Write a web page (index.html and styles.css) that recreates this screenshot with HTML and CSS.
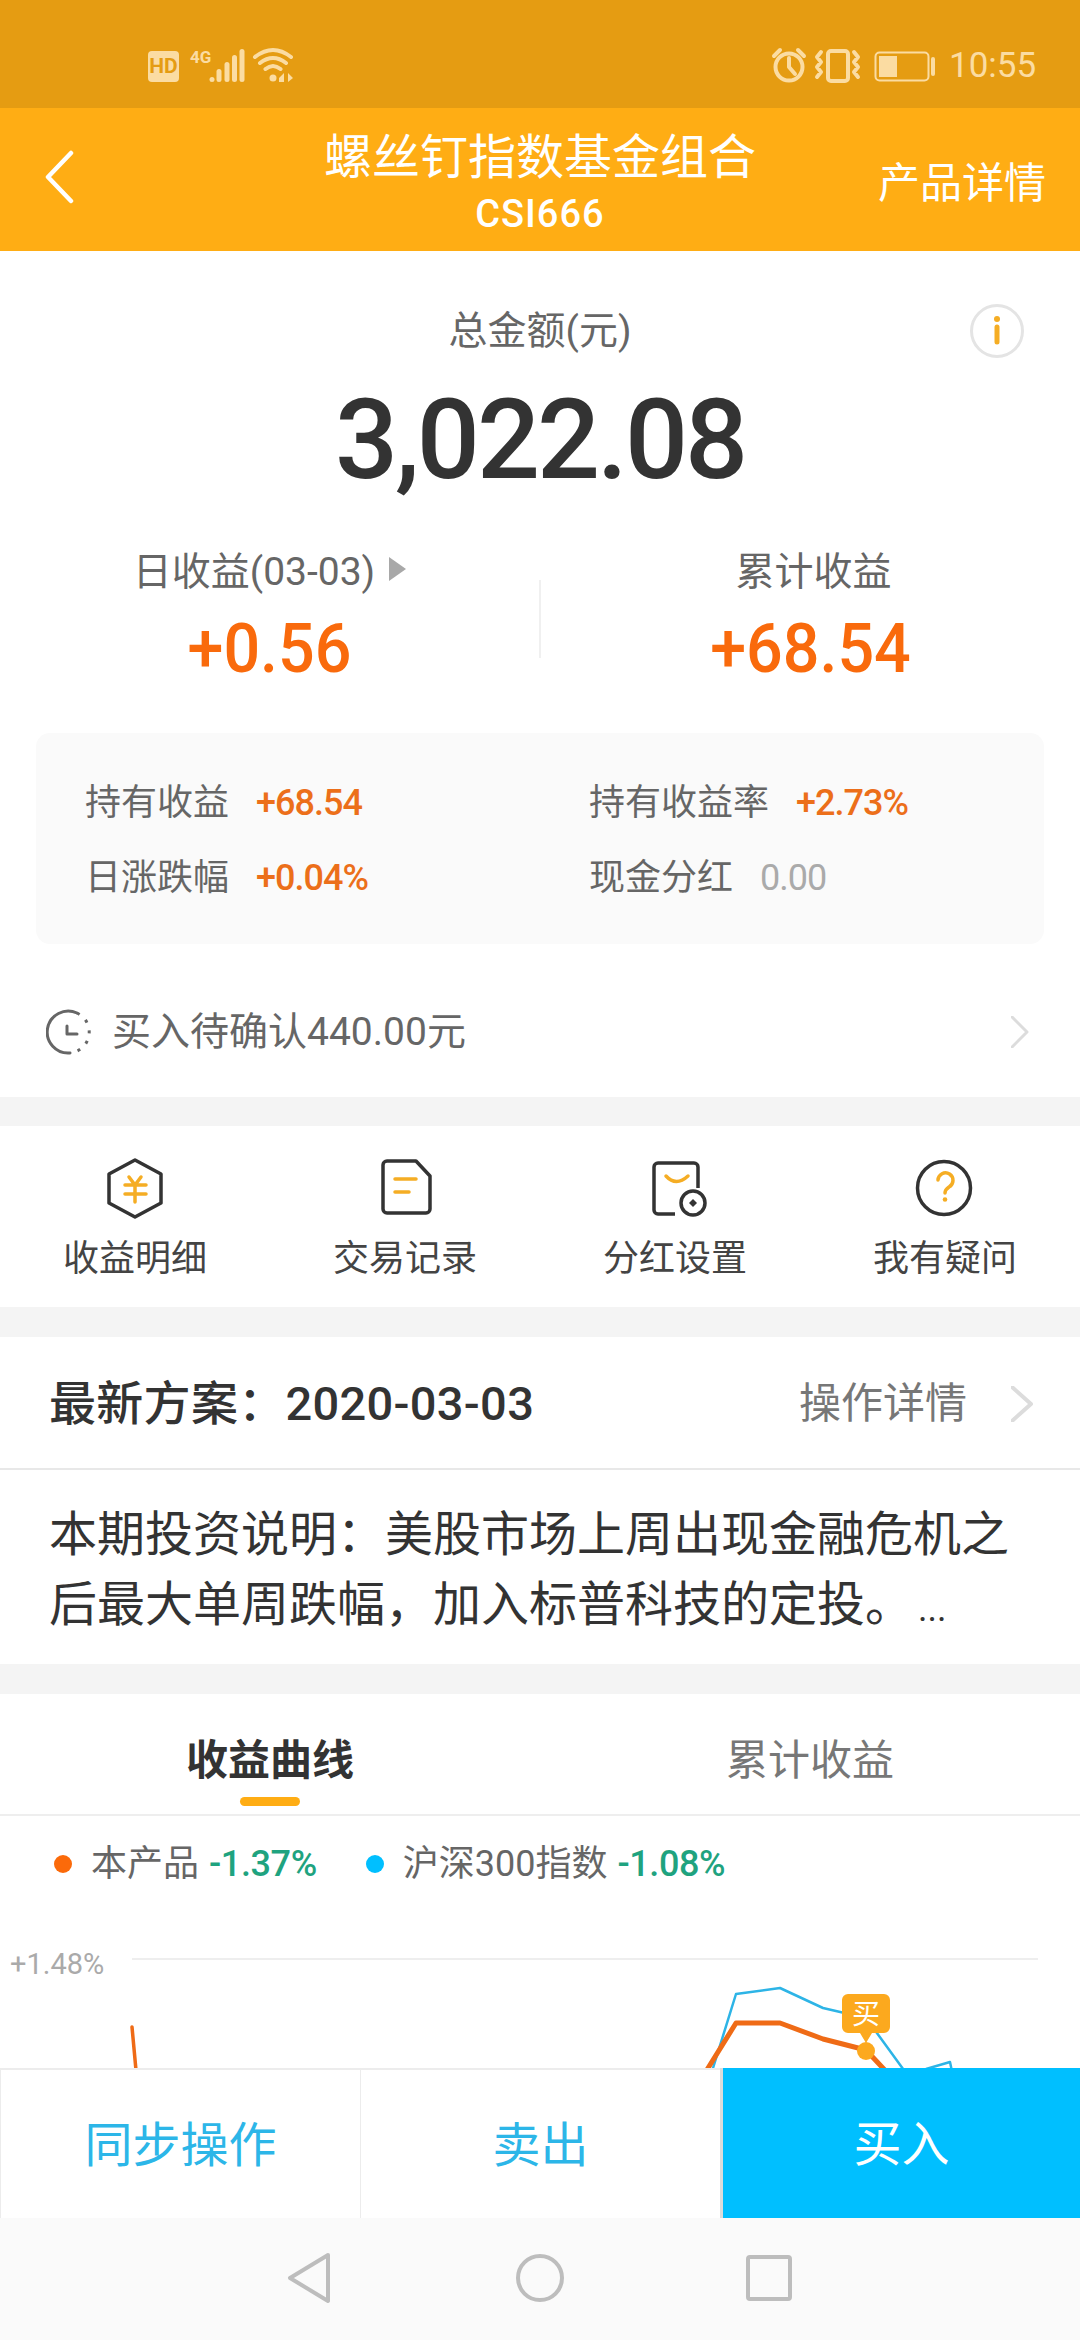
FILE: index.html
```html
<!DOCTYPE html>
<html lang="zh-CN">
<head>
<meta charset="utf-8">
<title>螺丝钉指数基金组合</title>
<link rel="stylesheet" href="styles.css">
</head>
<body>
<div class="screen">
  <div class="statusbar">
    <svg class="status-left" viewBox="148 46 150 40" width="150" height="40">
      <rect x="148" y="51" width="31" height="31" rx="4" class="sb-fill"/>
      <text x="163.500" y="73" class="sb-hd">HD</text>
      <text x="190" y="63" class="sb-4g">4G</text>
      <circle cx="212" cy="79.500" r="2.500" class="sb-fill"/>
      <rect x="216.500" y="69" width="5" height="13" rx="2.500" class="sb-fill"/>
      <rect x="224.500" y="62" width="5" height="20" rx="2.500" class="sb-fill"/>
      <rect x="232" y="55" width="5" height="27" rx="2.500" class="sb-fill"/>
      <rect x="239.500" y="49" width="5" height="33" rx="2.500" class="sb-fill"/>
      <path d="M255 57 Q273 43 291 57 M260 63 Q273 53 286 63 M265.500 69 Q273 63 280.500 69" class="sb-line"/>
      <circle cx="273" cy="78" r="3.500" class="sb-fill"/>
      <path d="M279 78 L284 73 V82 H279z M288 73 L293 78 L288 82z" class="sb-fill"/>
    </svg>
    <div class="status-right">
      <svg viewBox="770 46 168 40" width="168" height="40">
        <circle cx="789" cy="67" r="13.500" class="sb-line"/>
        <path d="M789 58 V67 L795 74 M774 56 L780 50 M804 56 L798 50" class="sb-line"/>
        <rect x="828" y="51" width="20" height="30" rx="3" class="sb-line"/>
        <path d="M821 52 L817 57 L821 62 L817 67 L821 72 L817 77 M854 52 L858 57 L854 62 L858 67 L854 72 L858 77" class="sb-line"/>
        <rect x="875.500" y="52.500" width="53" height="28" rx="4" class="sb-thin"/>
        <rect x="879" y="56" width="18" height="21" class="sb-fill"/>
        <rect x="931" y="57" width="4" height="19" rx="2" class="sb-fill"/>
      </svg>
      <span class="clock">10:55</span>
    </div>
  </div>

  <header class="topbar">
    <div class="topbar-left">
      <svg viewBox="0 0 30 54" width="30" height="54"><path d="M27 3 L4 27 L27 51" class="back"/></svg>
    </div>
    <div class="topbar-title">
      <div class="title">螺丝钉指数基金组合</div>
      <div class="code">CSI666</div>
    </div>
    <div class="topbar-right">产品详情</div>
  </header>

  <section class="summary">
    <svg class="info" viewBox="0 0 54 54" width="54" height="54">
      <circle cx="27" cy="27" r="25.500" class="info-ring"/>
      <circle cx="27" cy="15" r="3" class="info-dot"/>
      <path d="M27 23 V38" class="info-bar"/>
    </svg>
    <div class="total-label">总金额(元)</div>
    <div class="total-value">3,022.08</div>
    <div class="stats">
      <div class="stat">
        <div class="stat-label">日收益(03-03)<svg class="tri" viewBox="0 0 17 24" width="17" height="24"><path d="M0 0 L17 12 L0 24z"/></svg></div>
        <div class="stat-value">+0.56</div>
      </div>
      <div class="stat-divider"></div>
      <div class="stat">
        <div class="stat-label stat-label-right">累计收益</div>
        <div class="stat-value">+68.54</div>
      </div>
    </div>
    <div class="card">
      <div class="card-cell"><span class="card-label">持有收益</span><span class="card-value">+68.54</span></div>
      <div class="card-cell"><span class="card-label">持有收益率</span><span class="card-value">+2.73%</span></div>
      <div class="card-cell"><span class="card-label">日涨跌幅</span><span class="card-value">+0.04%</span></div>
      <div class="card-cell"><span class="card-label">现金分红</span><span class="card-value muted">0.00</span></div>
    </div>
    <div class="pending">
      <svg viewBox="0 0 46 46" width="46" height="46" class="pending-icon">
        <path d="M31 4 A21 21 0 1 0 24 44" class="clock-line"/>
        <path d="M31 4 A21 21 0 0 1 24 44" class="clock-dash"/>
        <path d="M21 17 V25 H31" class="clock-line"/>
      </svg>
      <span class="pending-text">买入待确认440.00元</span>
      <svg viewBox="0 0 18 32" width="18" height="32" class="chev-small"><path d="M1 1 L16 16 L1 31" class="chev"/></svg>
    </div>
  </section>

  <nav class="actions">
    <div class="action">
      <svg viewBox="0 0 64 64" width="64" height="64">
        <path d="M32 4 L58 18 V47 L32 61 L6 47 V18z" class="ic-dark"/>
        <path d="M26 21 L32 29 L38 21 M22 29 H43 M22 38 H43 M32 29 V46" class="ic-amber"/>
      </svg>
      <span>收益明细</span>
    </div>
    <div class="action">
      <svg viewBox="0 0 64 64" width="64" height="64">
        <path d="M14 5 H43 L57 20 V53 A4 4 0 0 1 53 57 H14 A4 4 0 0 1 10 53 V9 A4 4 0 0 1 14 5z" class="ic-dark"/>
        <path d="M22 23 H43 M22 36 H36" class="ic-amber"/>
      </svg>
      <span>交易记录</span>
    </div>
    <div class="action">
      <svg viewBox="0 0 64 64" width="64" height="64">
        <path d="M32 58 H15 A4 4 0 0 1 11 54 V11 A4 4 0 0 1 15 7 H51 A4 4 0 0 1 55 11 V32" class="ic-dark"/>
        <circle cx="50" cy="47" r="12" class="ic-dark"/>
        <path d="M50 43 L54 47 L50 51 L46 47z" class="ic-solid"/>
        <path d="M23 20 Q33 31 45 20" class="ic-amber"/>
      </svg>
      <span>分红设置</span>
    </div>
    <div class="action">
      <svg viewBox="0 0 64 64" width="64" height="64">
        <circle cx="31" cy="32" r="26.500" class="ic-dark"/>
        <path d="M25 24 A7.500 7.500 0 1 1 36 31 C33 33 32 34 32 37" class="ic-amber"/>
        <circle cx="32" cy="43.500" r="2.300" class="ic-amber-fill"/>
      </svg>
      <span>我有疑问</span>
    </div>
  </nav>

  <section class="plan">
    <div class="plan-head">
      <div class="plan-title">最新方案：2020-03-03</div>
      <div class="plan-link">操作详情</div>
      <svg viewBox="0 0 22 36" width="22" height="36"><path d="M1 1 L20 18 L1 35" class="chev chev-heavy"/></svg>
    </div>
    <p class="plan-body">本期投资说明：美股市场上周出现金融危机之后最大单周跌幅，加入标普科技的定投。<span class="more">...</span></p>
  </section>

  <section class="curve">
    <div class="tabs">
      <div class="tab tab-on">收益曲线</div>
      <div class="tab">累计收益</div>
    </div>
    <div class="legend">
      <i class="dot dot-orange"></i><span class="legend-name">本产品</span><span class="legend-value">-1.37%</span>
      <i class="dot dot-blue"></i><span class="legend-name">沪深300指数</span><span class="legend-value">-1.08%</span>
    </div>
    <svg class="chart" viewBox="0 1911 1080 230" width="1080" height="230">
      <path d="M132 1958 H1038" class="grid"/>
      <text x="10" y="1973" class="axis">+1.48%</text>
      <text x="27" y="2088" class="axis">0.00%</text>
      <path d="M709 2080 L736 1993 L780 1987 L823 2007 L866 2017 L906 2072 M926 2068 L950 2061 L954 2080" class="line-blue"/>
      <path d="M132 2026 L137 2080" class="line-orange thin"/>
      <path d="M700 2080 L736 2022 L780 2022 L823 2038 L866 2049 L895 2080" class="line-orange"/>
      <path d="M842 1999 A6 6 0 0 1 848 1993 H884 A6 6 0 0 1 890 1999 V2026 A6 6 0 0 1 884 2032 H872 L866 2042 L860 2032 H848 A6 6 0 0 1 842 2026z" class="marker"/>
      <circle cx="866" cy="2050" r="9" class="marker"/>
      <text x="866" y="2023" class="marker-text">买</text>
    </svg>
  </section>

  <div class="dock">
    <div class="dock-btn">同步操作</div>
    <div class="dock-btn">卖出</div>
    <div class="dock-btn dock-primary">买入</div>
  </div>

  <div class="navbar">
    <svg viewBox="0 0 44 52" width="44" height="52"><path d="M41 3 L3 26 L41 49z" class="nav-line"/></svg>
    <svg viewBox="0 0 50 50" width="50" height="50"><circle cx="25" cy="25" r="22" class="nav-line"/></svg>
    <svg viewBox="0 0 46 46" width="46" height="46"><rect x="2" y="2" width="42" height="42" rx="2" class="nav-line"/></svg>
  </div>
</div>
</body>
</html>
```

FILE: styles.css
```css
* { box-sizing: border-box; }
html, body { margin: 0; padding: 0; }
body { background: #f4f4f4; font-family: Roboto, "Noto Sans CJK SC", sans-serif; }
.screen { position: relative; width: 1080px; height: 2340px; overflow: hidden; background: #f4f4f4; display: flex; flex-direction: column; }

.statusbar { height: 108px; flex: none; background: #e59c12; display: flex; align-items: flex-start; justify-content: space-between; padding: 46px 46px 0 148px; }
.status-left, .status-right svg { display: block; }
.status-right { display: flex; align-items: flex-start; }
.clock { font-size: 35px; line-height: 40px; color: #fbdca2; margin-left: 11px; width: 85px; white-space: nowrap; }
.sb-fill { fill: #fbdca2; }
.sb-line { fill: none; stroke: #fbdca2; stroke-width: 4; stroke-linecap: round; stroke-linejoin: round; }
.sb-thin { fill: none; stroke: #fbdca2; stroke-width: 2; }
.sb-hd { font: 700 21px Roboto, sans-serif; fill: #e59c12; text-anchor: middle; }
.sb-4g { font: 700 17px Roboto, sans-serif; fill: #fbdca2; }

.topbar { height: 143px; flex: none; background: #ffad14; color: #fff; display: grid; grid-template-columns: 1fr auto 1fr; align-items: center; }
.topbar-left { padding: 0 0 6px 44px; }
.topbar-left svg { display: block; }
.back { fill: none; stroke: #fff; stroke-width: 4.500; stroke-linecap: round; stroke-linejoin: round; }
.topbar-title { text-align: center; padding-top: 5px; }
.title { font-size: 48px; line-height: 64px; }
.code { font-size: 38px; font-weight: 500; line-height: 48px; letter-spacing: 1px; }
.topbar-right { font-size: 42px; line-height: 60px; text-align: right; padding-right: 34px; margin-bottom: -8px; }

.summary { position: relative; background: #fff; flex: none; height: 846px; padding-top: 55px; }
.info { position: absolute; left: 970px; top: 53px; display: block; }
.info-ring { fill: #fff; stroke: #e4e4e4; stroke-width: 3; }
.info-dot { fill: #f5ad24; }
.info-bar { stroke: #f5ad24; stroke-width: 5; stroke-linecap: round; }
.total-label { font-size: 39px; line-height: 50px; color: #666; text-align: center; }
.total-value { font-size: 111px; line-height: 120px; font-weight: 500; color: #333; text-align: center; letter-spacing: -3px; margin-top: 24px; margin-bottom: -3px; }
.stats { display: grid; grid-template-columns: 1fr 2px 1fr; margin-top: 50px; }
.stat { text-align: center; }
.stat-label { font-size: 39px; line-height: 50px; color: #666; }
.stat-label-right { padding-left: 6px; }
.tri { margin-left: 14px; vertical-align: 4px; fill: #a8a8a8; }
.stat-value { font-size: 68px; line-height: 80px; font-weight: 500; color: #f96a0c; margin-top: 12px; transform: scaleX(.95); }
.stat-divider { background: #f0f0f0; width: 2px; height: 78px; align-self: end; margin-bottom: 31px; }

.card { margin: 44px 36px 0; height: 211px; border-radius: 14px; background: #fafafa; padding: 45px 0 0 49px; display: grid; grid-template-columns: 504px 1fr; grid-auto-rows: 50px; row-gap: 25px; }
.card-cell { display: flex; align-items: center; gap: 27px; }
.card-label { font-size: 36px; line-height: 50px; color: #666; white-space: nowrap; }
.card-value { font-size: 36px; line-height: 50px; font-weight: 500; color: #ec6f1a; letter-spacing: -1px; }
.card-value.muted { color: #aaa; font-weight: 400; }

.pending { display: flex; align-items: center; padding: 63px 51px 40px 46px; height: 153px; }
.pending-icon { flex: none; }
.clock-line { fill: none; stroke: #666; stroke-width: 3; stroke-linecap: round; stroke-linejoin: round; }
.clock-dash { fill: none; stroke: #666; stroke-width: 3; stroke-dasharray: 3 8; }
.pending-text { font-size: 39px; line-height: 50px; color: #666; margin-left: 20px; flex: 1; }
.chev { fill: none; stroke: #dcdcdc; stroke-width: 3; stroke-linecap: round; stroke-linejoin: round; }
.chev-heavy { stroke-width: 4; }

.actions { flex: none; height: 181px; margin-top: 29px; background: #fff; display: grid; grid-template-columns: repeat(4, 270px); padding-top: 30px; }
.action { display: flex; flex-direction: column; align-items: center; font-size: 36px; line-height: 50px; color: #444; }
.action svg { display: block; margin-bottom: 14px; }
.ic-dark { fill: none; stroke: #333; stroke-width: 3.500; stroke-linejoin: round; }
.ic-solid { fill: #333; }
.ic-amber { fill: none; stroke: #f5ad24; stroke-width: 3.500; stroke-linecap: round; stroke-linejoin: round; }
.ic-amber-fill { fill: #f5ad24; }

.plan { flex: none; margin-top: 30px; background: #fff; height: 327px; }
.plan-head { height: 133px; display: flex; align-items: center; padding: 2px 47px 0 49px; border-bottom: 2px solid #e8e8e8; }
.plan-title { flex: 1; font-size: 47px; line-height: 64px; font-weight: 500; color: #333; letter-spacing: .3px; }
.plan-link { font-size: 42px; line-height: 60px; color: #777; margin-right: 44px; }
.plan-body { margin: 0; padding: 30px 49px 0; font-size: 48px; line-height: 70px; color: #333; }
.more { font-size: 36px; margin-left: 5px; }

.curve { flex: 1; margin-top: 30px; background: #fff; min-height: 0; }
.tabs { height: 122px; display: grid; grid-template-columns: 1fr 1fr; border-bottom: 2px solid #eee; }
.tab { position: relative; text-align: center; font-size: 42px; line-height: 56px; padding-top: 39px; color: #777; }
.tab-on { color: #333; font-weight: 700; }
.tab-on::after { content: ""; position: absolute; left: 240px; top: 103px; width: 60px; height: 9px; border-radius: 5px; background: #ffad14; }
.legend { display: flex; align-items: center; height: 96px; padding-left: 54px; }
.dot { width: 18px; height: 18px; border-radius: 50%; margin-right: 19px; flex: none; }
.dot-orange { background: #fb6a0a; }
.dot-blue { background: #00bfff; margin-left: 49px; }
.legend-name { font-size: 36px; line-height: 50px; color: #666; }
.legend-value { font-size: 36px; line-height: 50px; font-weight: 500; color: #1fa37f; margin-left: 10px; letter-spacing: -.4px; }
.chart { display: block; }
.grid { stroke: #eee; stroke-width: 2; fill: none; }
.axis { font-size: 29px; fill: #aaa; }
.line-blue { fill: none; stroke: #2db4e6; stroke-width: 2.500; stroke-linejoin: round; }
.line-orange { fill: none; stroke: #ef6b16; stroke-width: 5; stroke-linejoin: round; }
.line-orange.thin { stroke-width: 3.500; stroke-linecap: round; }
.marker { fill: #fca91e; }
.marker-text { font-size: 28px; fill: #fff; text-anchor: middle; }

.dock { position: absolute; left: 0; top: 2068px; width: 1080px; height: 150px; display: grid; grid-template-columns: 360px 360px 360px; background: #fff; border-top: 2px solid #ececec; }
.dock-btn { display: flex; align-items: center; justify-content: center; font-size: 48px; color: #2cb6e8; border-left: 1px solid #ececec; padding-bottom: 6px; }
.dock-primary { background: #00bfff; color: #fff; border-left: 3px solid #dcdcdc; margin-top: -2px; }

.navbar { position: absolute; left: 0; top: 2218px; width: 1080px; height: 122px; background: #fafafa; }
.navbar svg { position: absolute; top: 34px; }
.navbar svg:nth-child(1) { left: 287px; }
.navbar svg:nth-child(2) { left: 515px; top: 35px; }
.navbar svg:nth-child(3) { left: 746px; top: 37px; }
.nav-line { fill: none; stroke: #bdbdbd; stroke-width: 4; stroke-linejoin: round; }
```
